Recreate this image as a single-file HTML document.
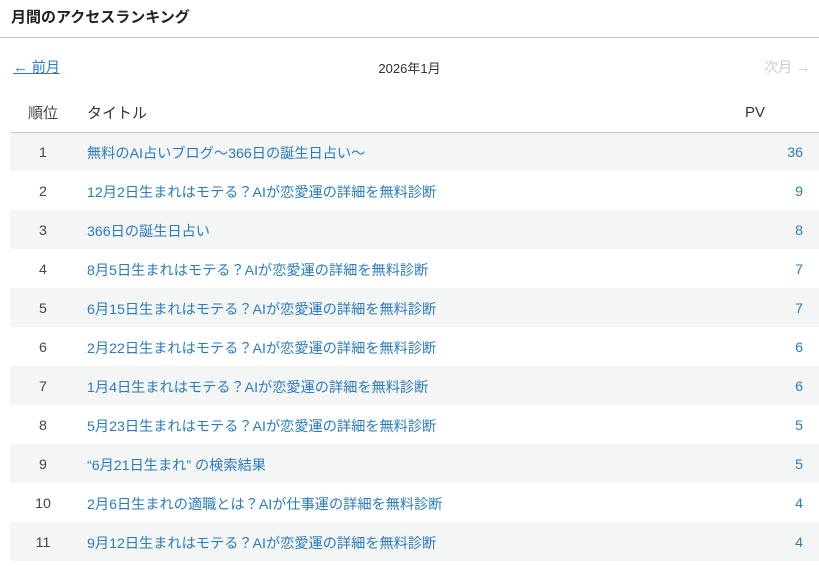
<!DOCTYPE html>
<html><head><meta charset="utf-8"><style>
*{margin:0;padding:0;box-sizing:border-box}
body{width:819px;height:566px;overflow:hidden;background:#fff;font-family:"Liberation Sans","Noto Sans CJK JP",sans-serif;color:#333;font-size:14.2px}
h2{font-size:15px;font-weight:bold;height:38px;line-height:36px;padding-left:11px;border-bottom:1px solid #c8c8c8;color:#222}
.nav{position:relative;height:55px}
.nav a{position:absolute;top:19px;font-size:14px}
.prev{left:13px;color:#2a7bbf;text-decoration:underline}
.mid{position:absolute;top:20px;left:0;right:0;text-align:center;font-size:13px;color:#333}
.next{right:8px;color:#ccc}
.ar{font-size:15px}
table{margin-left:10px;width:809px;border-collapse:collapse}
th{font-weight:normal;font-size:15px;height:39px;text-align:left;border-bottom:1px solid #c8c8c8;color:#333}
td{height:39px;color:#2a7bbf;padding-top:2px}
tr:nth-child(odd) td{background:#f4f5f5}
.r{width:66px;text-align:center;color:#444}
th.r{text-align:center}
.t{padding-left:11px}
.p{text-align:right;padding-right:16px;width:120px}
th.p{text-align:left;padding-left:46px}
</style></head><body>
<h2>月間のアクセスランキング</h2>
<div class="nav"><a class="prev"><span class="ar">←</span> 前月</a><div class="mid">2026年1月</div><a class="next">次月 <span class="ar">→</span></a></div>
<table>
<thead><tr><th class="r">順位</th><th class="t">タイトル</th><th class="p">PV</th></tr></thead>
<tbody>
<tr><td class="r">1</td><td class="t">無料のAI占いブログ〜366日の誕生日占い〜</td><td class="p">36</td></tr>
<tr><td class="r">2</td><td class="t">12月2日生まれはモテる？AIが恋愛運の詳細を無料診断</td><td class="p">9</td></tr>
<tr><td class="r">3</td><td class="t">366日の誕生日占い</td><td class="p">8</td></tr>
<tr><td class="r">4</td><td class="t">8月5日生まれはモテる？AIが恋愛運の詳細を無料診断</td><td class="p">7</td></tr>
<tr><td class="r">5</td><td class="t">6月15日生まれはモテる？AIが恋愛運の詳細を無料診断</td><td class="p">7</td></tr>
<tr><td class="r">6</td><td class="t">2月22日生まれはモテる？AIが恋愛運の詳細を無料診断</td><td class="p">6</td></tr>
<tr><td class="r">7</td><td class="t">1月4日生まれはモテる？AIが恋愛運の詳細を無料診断</td><td class="p">6</td></tr>
<tr><td class="r">8</td><td class="t">5月23日生まれはモテる？AIが恋愛運の詳細を無料診断</td><td class="p">5</td></tr>
<tr><td class="r">9</td><td class="t">“6月21日生まれ” の検索結果</td><td class="p">5</td></tr>
<tr><td class="r">10</td><td class="t">2月6日生まれの適職とは？AIが仕事運の詳細を無料診断</td><td class="p">4</td></tr>
<tr><td class="r">11</td><td class="t">9月12日生まれはモテる？AIが恋愛運の詳細を無料診断</td><td class="p">4</td></tr>
</tbody></table>
</body></html>
